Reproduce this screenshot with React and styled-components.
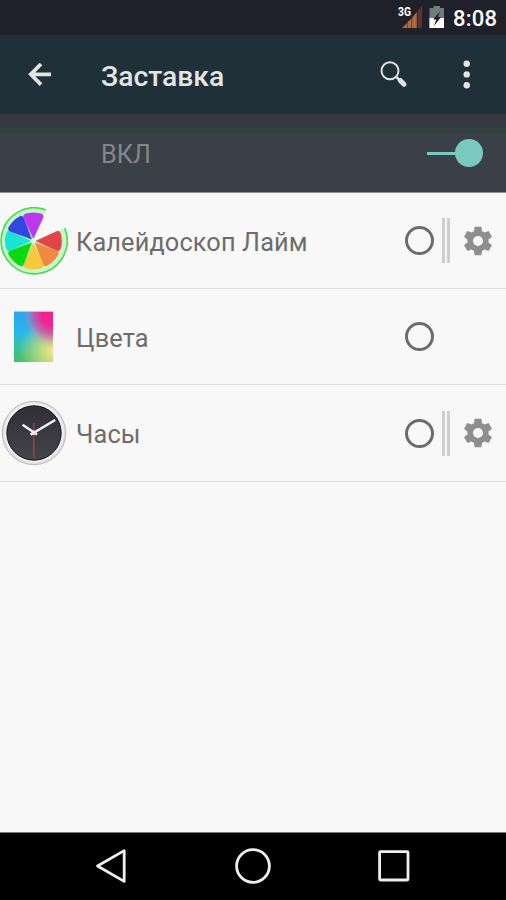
import React, { useState } from "react"
import styled, { createGlobalStyle } from "styled-components"

const GlobalStyle = createGlobalStyle`
  * {
    box-sizing: border-box;
  }

  body {
    margin: 0;
    background: #f8f8f8;
    font-family: Roboto, "Noto Sans", sans-serif;
  }
`

const Screen = styled.div`
  display: flex;
  flex-direction: column;
  width: 506px;
  height: 900px;
  overflow: hidden;
  background: #f8f8f8;

  svg {
    display: block;
    flex: none;
  }
`

const StatusBar = styled.div`
  display: flex;
  flex: none;
  height: 35px;
  padding-left: 397px;
  background: #20202a;
`

const Time = styled.span`
  width: 60px;
  margin-left: 5px;
  color: #fff;
  font-size: 22px;
  font-weight: 500;
  line-height: 37px;
  letter-spacing: 0.2px;
`

const AppBar = styled.header`
  display: flex;
  flex: none;
  height: 79px;
  background: #203038;
`

const Title = styled.h1`
  flex: 1;
  margin: 0;
  color: #e3e4e4;
  font-size: 28.3px;
  font-weight: 500;
  line-height: 83px;
`

const IconButton = styled.button`
  display: block;
  width: ${props => props.$width}px;
  height: 79px;
  padding: 0;
  border: 0;
  background: none;
`

const SwitchBar = styled.div`
  display: flex;
  align-items: center;
  flex: none;
  height: 79px;
  padding: 0 22px 0 101px;
  background: linear-gradient(
    #333a41 14px,
    #31403f 14px,
    #31403f 19px,
    #394047 20px
  );
  border-bottom: 1px solid #8a8e91;
`

const SwitchLabel = styled.span`
  flex: 1;
  padding-top: 4px;
  color: #828889;
  font-size: 25.2px;
  line-height: 30px;
`

const Toggle = styled.button`
  display: flex;
  align-items: center;
  width: 56px;
  height: 28px;
  margin-right: 1px;
  padding: 0;
  border: 0;
  background: none;

  &::before {
    content: "";
    width: 28px;
    height: 3px;
    background: #79c9c0;
  }

  &::after {
    content: "";
    width: 28px;
    height: 28px;
    border-radius: 50%;
    background: #79c9c0;
  }
`

const List = styled.main`
  flex: 1;
`

const Row = styled.div`
  display: flex;
  align-items: center;
  height: 96px;
  border-bottom: 1px solid #dedede;

  &:last-child {
    height: 97px;
  }
`

const Name = styled.span`
  flex: 1;
  padding: 4px 0 0 8px;
  color: #6c6c6c;
  font-size: 25.3px;
  line-height: 30px;
  letter-spacing: 0.15px;
`

const Radio = styled.button`
  width: 29px;
  height: 29px;
  margin-right: 8px;
  padding: 0;
  border: 3px solid #6c6c6c;
  border-radius: 50%;
  background: ${props => (props.$checked ? "#79c9c0" : "none")};
`

const Settings = styled.div`
  display: flex;
  align-items: center;
  width: 64px;
  height: 45px;
`

const Divider = styled.div`
  width: 8px;
  height: 45px;
  border: solid #cecece;
  border-width: 0 3px;
`

const Swatch = styled.div`
  width: 39px;
  height: 51px;
  margin: 0 15px 0 14px;
  border-top: 1px solid #d9b9d9;
  background: radial-gradient(
      ellipse 76% 72% at 100% 0%,
      #f22391 38%,
      rgba(236, 60, 150, 0.75) 62%,
      rgba(226, 120, 165, 0.3) 85%,
      rgba(200, 140, 180, 0) 100%
    ),
    radial-gradient(
      ellipse 95% 66% at 106% 78%,
      #f3e388 8%,
      rgba(225, 228, 129, 0.75) 40%,
      rgba(150, 220, 129, 0) 100%
    ),
    linear-gradient(#2ba9ee 12%, #28b8e6 45%, #37c0a0 70%, #43c069 96%);
`

const NavBar = styled.footer`
  display: flex;
  align-items: center;
  flex: none;
  height: 68px;
  padding: 0 96px 1px 95px;
  border-top: 1px solid #777;
  background: #000;
  justify-content: space-between;
`

const SignalIcon = () => (
  <svg width="26" height="35">
    <text
      x="1"
      y="16"
      fill="#fff"
      fontSize="12"
      fontWeight="700"
      textLength="13"
      lengthAdjust="spacingAndGlyphs"
    >
      3G
    </text>
    <path d="M5 28 10 23V28ZM10.4 22.6 14.6 18.2V28H10.4Z" fill="#b4683f" />
    <path d="M15.2 17.4 19.8 12V28H15.2Z" fill="#b4683f" />
    <path d="M20.7 10.9 25 5.7V28H20.7Z" fill="#563832" />
  </svg>
)

const BatteryIcon = () => (
  <svg width="25" height="35">
    <path d="M6.5 8H10.5V6H17V8H21V28H6.5Z" fill="#717b79" />
    <path d="M6.5 18H21V28H6.5Z" fill="#fff" />
    <path d="M17 11.5 10 19.5H13.2L11 26 18 17H15Z" fill="#20202a" />
  </svg>
)

const BackArrow = () => (
  <svg width="101" height="79">
    <path
      d="M41 29 30.8 39.3 41 49.6M31.5 39.3H51"
      fill="none"
      stroke="#e3e4e4"
      strokeWidth="3.8"
    />
  </svg>
)

const SearchIcon = () => (
  <svg width="60" height="79">
    <g fill="none" stroke="#e0e1e2">
      <circle cx="24" cy="35.7" r="8.5" strokeWidth="2" />
      <path d="M30 41.7 33.5 45.2" strokeWidth="2.4" />
      <path
        d="M34.2 45.4 38 49.2"
        strokeWidth="5"
        strokeLinecap="round"
      />
    </g>
  </svg>
)

const MoreIcon = () => (
  <svg width="80" height="79" fill="#e3e4e4">
    <circle cx="40.7" cy="28.7" r="3.2" />
    <circle cx="40.7" cy="39.4" r="3.2" />
    <circle cx="40.7" cy="50.2" r="3.2" />
  </svg>
)

const Gear = styled.svg`
  width: 34px;
  height: 34px;
  margin-left: 11px;
  fill: #8e8e8e;
`

const GearIcon = () => (
  <Gear viewBox="0 0 24 24">
    <path d="M19.43 12.98c.04-.32.07-.64.07-.98s-.03-.66-.07-.98l2.11-1.65c.19-.15.24-.42.12-.64l-2-3.46c-.12-.22-.39-.3-.61-.22l-2.49 1c-.52-.4-1.08-.73-1.69-.98l-.38-2.65C14.46 2.18 14.25 2 14 2h-4c-.25 0-.46.18-.49.42l-.38 2.65c-.61.25-1.17.59-1.69.98l-2.49-1c-.23-.09-.49 0-.61.22l-2 3.46c-.13.22-.07.49.12.64l2.11 1.65c-.04.32-.07.65-.07.98s.03.66.07.98l-2.11 1.65c-.19.15-.24.42-.12.64l2 3.46c.12.22.39.3.61.22l2.49-1c.52.4 1.08.73 1.69.98l.38 2.65c.03.24.24.42.49.42h4c.25 0 .46-.18.49-.42l.38-2.65c.61-.25 1.17-.59 1.69-.98l2.49 1c.23.09.49 0 .61-.22l2-3.46c.12-.22.07-.49-.12-.64l-2.11-1.65zM12 15.5c-1.93 0-3.5-1.57-3.5-3.5s1.57-3.5 3.5-3.5 3.5 1.57 3.5 3.5-1.57 3.5-3.5 3.5z" />
  </Gear>
)

// Clockwise from the right, the eighth slice is cut out
const slices = [
  "#e2444a",
  "#f08840",
  "#f6c83e",
  "#0bd911",
  "#18e4da",
  "#3346e0",
  "#bd36f1",
]

const LimeIcon = () => (
  <svg width="68" height="68" viewBox="0 0 68 68">
    <path
      d="M33.5 34 46 2.9A33.2 33.2 0 1 0 64.9 21.2Z"
      fill="#c9f5c9"
    />
    <path
      d="M46 3A33 33 0 1 0 64.7 21.2"
      fill="none"
      stroke="#3fe04a"
      strokeWidth="1.6"
    />
    <g transform="translate(33.4 34)">
      {slices.map((color, i) => (
        <path
          key={color}
          d="M2.5 0 23.5-9.7Q26-10.7 27.2-7.6 29.4 0 27.2 7.6 26 10.7 23.5 9.7Z"
          fill={color}
          stroke={color}
          strokeWidth="0.4"
          transform={`rotate(${i * 45})`}
        />
      ))}
      <circle r="2.5" fill="#dcf8e2" />
    </g>
  </svg>
)

const ClockIcon = () => (
  <svg width="68" height="68" viewBox="0 0 68 68">
    <defs>
      <linearGradient id="face" x1="0" y1="0" x2="0" y2="1">
        <stop offset="0" stopColor="#302e36" />
        <stop offset="1" stopColor="#46444b" />
      </linearGradient>
    </defs>
    <circle cx="34" cy="34" r="31.7" fill="#dedee4" stroke="#bcbcbf" />
    <circle cx="34" cy="33.6" r="29.8" fill="#efeff3" />
    <circle cx="34" cy="34" r="27.2" fill="url(#face)" stroke="#17161c" />
    <path d="M33.8 24V59" stroke="#ba3f38" strokeWidth="1.3" />
    <path
      d="M22.6 25.8 37 35.4M30.6 35.6 55.2 21"
      fill="none"
      stroke="#f3f3f5"
      strokeWidth="2.4"
    />
    <circle cx="33.8" cy="33.8" r="2" fill="#f3f3f5" />
  </svg>
)

const savers = [
  { name: "Калейдоскоп Лайм", icon: <LimeIcon />, settings: true },
  { name: "Цвета", icon: <Swatch />, settings: false },
  { name: "Часы", icon: <ClockIcon />, settings: true },
]

const App = () => {
  const [selected, setSelected] = useState(null)

  return (
    <Screen>
      <GlobalStyle />
      <StatusBar>
        <SignalIcon />
        <BatteryIcon />
        <Time>8:08</Time>
      </StatusBar>
      <AppBar>
        <IconButton $width={101}>
          <BackArrow />
        </IconButton>
        <Title>Заставка</Title>
        <IconButton $width={60}>
          <SearchIcon />
        </IconButton>
        <IconButton $width={80}>
          <MoreIcon />
        </IconButton>
      </AppBar>
      <SwitchBar>
        <SwitchLabel>ВКЛ</SwitchLabel>
        <Toggle />
      </SwitchBar>
      <List>
        {savers.map(saver => (
          <Row key={saver.name}>
            {saver.icon}
            <Name>{saver.name}</Name>
            <Radio
              $checked={selected === saver.name}
              onClick={() => setSelected(saver.name)}
            />
            <Settings>
              {saver.settings && (
                <>
                  <Divider />
                  <GearIcon />
                </>
              )}
            </Settings>
          </Row>
        ))}
      </List>
      <NavBar>
        <svg width="32" height="36" fill="none" stroke="#eee">
          <path
            d="M2.5 18 29.2 2.6V33.4Z"
            strokeWidth="2.8"
            strokeLinejoin="round"
          />
        </svg>
        <svg width="38" height="38" fill="none" stroke="#eee">
          <circle cx="19" cy="19" r="16.4" strokeWidth="2.8" />
        </svg>
        <svg width="32" height="32" fill="none" stroke="#eee">
          <rect
            x="1.6"
            y="1.6"
            width="28.4"
            height="28.4"
            rx="1"
            strokeWidth="2.8"
          />
        </svg>
      </NavBar>
    </Screen>
  )
}

export default App
